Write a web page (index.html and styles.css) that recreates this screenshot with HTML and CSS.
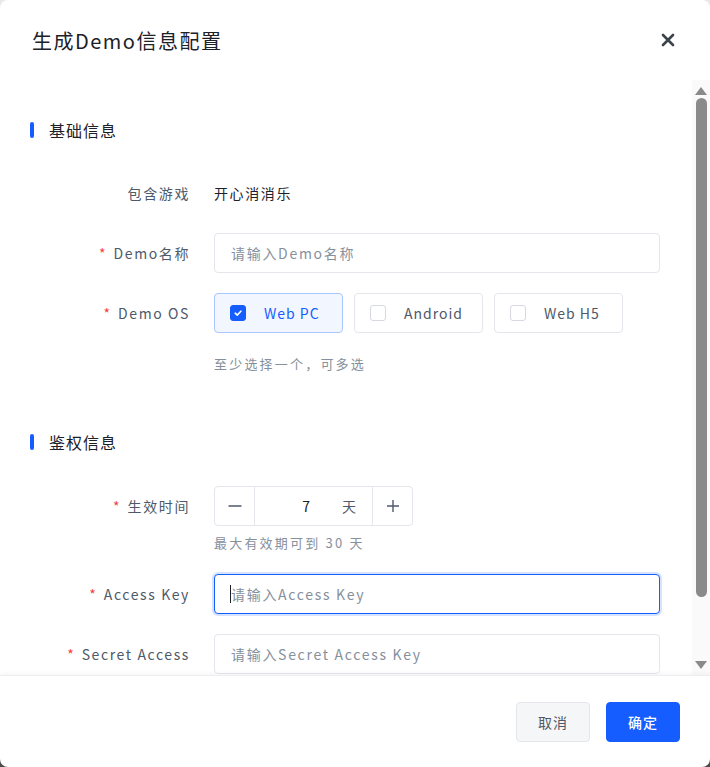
FILE: index.html
```html
<!DOCTYPE html>
<html lang="zh-CN">
<head>
<meta charset="utf-8">
<title>生成Demo信息配置</title>
<link rel="stylesheet" href="styles.css">
</head>
<body>
<div class="dialog">
  <header class="dialog-header">
    <h1 class="dialog-title">生成Demo信息配置</h1>
    <button class="close-btn" aria-label="关闭">
      <svg width="14" height="14" viewBox="0 0 14 14"><path d="M2 2 L12 12 M12 2 L2 12" stroke="#3d434d" stroke-width="2.6" stroke-linecap="round"/></svg>
    </button>
  </header>

  <div class="body-wrap">
    <div class="dialog-body">
      <h2 class="section-title">基础信息</h2>

      <div class="form-item">
        <label class="form-label">包含游戏</label>
        <div class="form-control"><span class="static-value">开心消消乐</span></div>
      </div>

      <div class="form-item">
        <label class="form-label"><span class="req">*</span>Demo名称</label>
        <div class="form-control"><input class="input" type="text" placeholder="请输入Demo名称"></div>
      </div>

      <div class="form-item">
        <label class="form-label"><span class="req">*</span>Demo OS</label>
        <div class="form-control">
          <div class="check-group">
            <label class="check-card checked"><span class="check-box"><svg width="10" height="10" viewBox="0 0 10 10"><path d="M2.2 5.2 L4.2 7.1 L7.9 3.2" fill="none" stroke="#fff" stroke-width="1.6" stroke-linecap="round" stroke-linejoin="round"/></svg></span><span class="check-text">Web PC</span></label>
            <label class="check-card"><span class="check-box"></span><span class="check-text">Android</span></label>
            <label class="check-card"><span class="check-box"></span><span class="check-text">Web H5</span></label>
          </div>
          <div class="help help-os">至少选择一个，可多选</div>
        </div>
      </div>

      <h2 class="section-title section-second">鉴权信息</h2>

      <div class="form-item">
        <label class="form-label"><span class="req">*</span>生效时间</label>
        <div class="form-control">
          <div class="number-input">
            <span class="step-btn"><svg width="14" height="14" viewBox="0 0 14 14"><path d="M0.5 7 H13.5" stroke="#4e5969" stroke-width="1.4"/></svg></span>
            <span class="number-mid"><span class="number-value">7</span><span class="number-suffix">天</span></span>
            <span class="step-btn step-plus"><svg width="14" height="14" viewBox="0 0 14 14"><path d="M1 7 H13 M7 1 V13" stroke="#4e5969" stroke-width="1.4"/></svg></span>
          </div>
          <div class="help help-time">最大有效期可到 30 天</div>
        </div>
      </div>

      <div class="form-item item-after-help">
        <label class="form-label"><span class="req">*</span>Access Key</label>
        <div class="form-control input-wrap">
          <input class="input input-focus" type="text" placeholder="请输入Access Key">
          <span class="caret"></span>
        </div>
      </div>

      <div class="form-item">
        <label class="form-label"><span class="req">*</span>Secret Access</label>
        <div class="form-control"><input class="input" type="text" placeholder="请输入Secret Access Key"></div>
      </div>
    </div>

    <div class="fake-scrollbar" aria-hidden="true">
      <span class="sb-arrow sb-up"></span>
      <span class="sb-track"><span class="sb-thumb"></span></span>
      <span class="sb-arrow sb-down"></span>
    </div>
  </div>

  <footer class="dialog-footer">
    <button class="btn btn-cancel">取消</button>
    <button class="btn btn-primary">确定</button>
  </footer>
</div>
</body>
</html>
```

FILE: styles.css
```css
* { box-sizing: border-box; }
html, body { margin: 0; padding: 0; }
body {
  width: 710px;
  height: 767px;
  background: linear-gradient(#e8e9ec, #4a4a4a);
  font-family: "Noto Sans CJK SC", "Noto Sans", sans-serif;
  overflow: hidden;
}
.dialog {
  width: 710px;
  height: 767px;
  background: #fff;
  border-radius: 8px;
  display: flex;
  flex-direction: column;
  overflow: hidden;
}
.dialog-header {
  height: 80px;
  flex: none;
  display: flex;
  align-items: center;
  justify-content: space-between;
  padding: 0 35px 0 32px;
}
.dialog-title {
  margin: 0;
  font-size: 20px;
  font-weight: 400;
  color: #1d2129;
  line-height: 28px;
  margin-top: 2px;
  letter-spacing: 1.5px;
}
.close-btn {
  border: 0;
  background: none;
  padding: 0;
  width: 14px;
  height: 14px;
  display: flex;
}
.body-wrap {
  flex: 1;
  position: relative;
  overflow: hidden;
}
.dialog-body {
  height: 100%;
  overflow: hidden;
  padding: 40px 0 84px 0;
}
.fake-scrollbar {
  position: absolute;
  top: 0;
  right: 0;
  width: 18px;
  height: 100%;
  background: #fafafa;
  display: flex;
  flex-direction: column;
  align-items: center;
  padding: 7px 0 6px;
}
.sb-arrow {
  width: 0;
  height: 0;
  border-left: 6px solid transparent;
  border-right: 6px solid transparent;
  flex: none;
}
.sb-up { border-bottom: 8px solid #8a8a8a; }
.sb-down { border-top: 8px solid #8a8a8a; }
.sb-track {
  flex: 1;
  width: 100%;
  display: flex;
  justify-content: center;
  padding: 3px 0 64px;
}
.sb-thumb {
  width: 11px;
  height: 100%;
  border-radius: 6px;
  background: #8a8a8a;
}
.section-title {
  margin: 0 0 33px 30px;
  padding-left: 19px;
  position: relative;
  font-size: 16px;
  font-weight: 400;
  line-height: 20px;
  color: #1d2129;
  letter-spacing: 1px;
}
.section-title::before {
  content: "";
  position: absolute;
  left: 0;
  top: 2px;
  width: 4px;
  height: 16px;
  border-radius: 2px;
  background: #165dff;
}
.section-second { margin-top: 58px; margin-bottom: 34px; }
.form-item {
  display: grid;
  grid-template-columns: 190px 446px;
  column-gap: 24px;
  align-items: start;
}
.form-item + .form-item { margin-top: 20px; }
.form-item.item-after-help { margin-top: 21px; }
.form-label {
  height: 40px;
  display: flex;
  align-items: center;
  justify-content: flex-end;
  font-size: 14px;
  color: #4e5969;
  letter-spacing: 1.6px;
  white-space: nowrap;
}
.req {
  color: #f53f3f;
  margin-right: 8px;
  letter-spacing: 0;
}
.form-control { min-height: 40px; }
.input-wrap { position: relative; }
.caret {
  position: absolute;
  left: 16px;
  top: 11px;
  width: 1px;
  height: 18px;
  background: #1d2129;
}
.static-value {
  display: flex;
  align-items: center;
  height: 40px;
  font-size: 14px;
  color: #1d2129;
  letter-spacing: 1.6px;
}
.input {
  display: block;
  width: 446px;
  height: 40px;
  border: 1px solid #e5e6eb;
  border-radius: 4px;
  padding: 0 16px;
  font-family: inherit;
  font-size: 14px;
  letter-spacing: 1.7px;
  color: #1d2129;
  background: #fff;
  outline: none;
}
.input::placeholder { color: #86909c; }
.input-focus, .input:focus {
  border-color: #165dff;
  box-shadow: 0 0 0 2px #d6e3ff;
}
.check-group { display: flex; gap: 11px; }
.check-card {
  width: 129px;
  height: 40px;
  border: 1px solid #e5e6eb;
  border-radius: 4px;
  display: flex;
  align-items: center;
  padding-left: 15px;
  font-size: 14px;
  color: #4e5969;
  letter-spacing: 1px;
  background: #fff;
}
.check-card.checked {
  border-color: #a8c6ff;
  background: #f2f6ff;
  color: #165dff;
}
.check-box {
  width: 16px;
  height: 16px;
  border: 1.5px solid #d6d9df;
  border-radius: 3px;
  margin-right: 18px;
  display: flex;
  align-items: center;
  justify-content: center;
  flex: none;
}
.checked .check-box { background: #165dff; border-color: #165dff; }
.help {
  font-size: 13px;
  line-height: 20px;
  color: #86909c;
  letter-spacing: 2.2px;
}
.help-os { margin-top: 21px; }
.help-time { margin-top: 7px; }
.number-input {
  width: 199px;
  height: 40px;
  border: 1px solid #e5e6eb;
  border-radius: 4px;
  display: flex;
  overflow: hidden;
}
.step-btn {
  width: 40px;
  flex: none;
  display: flex;
  align-items: center;
  justify-content: center;
  border-right: 1px solid #e5e6eb;
}
.step-plus { border-right: 0; border-left: 1px solid #e5e6eb; }
.number-mid {
  flex: 1;
  display: flex;
  align-items: center;
  font-size: 14px;
  color: #1d2129;
  padding-right: 16px;
}
.number-value { flex: 1; text-align: right; padding-right: 32px; }
.number-suffix { color: #4e5969; }
.dialog-footer {
  height: 92px;
  flex: none;
  display: flex;
  align-items: center;
  justify-content: flex-end;
  gap: 16px;
  padding-right: 30px;
  border-top: 1px solid #eceef1;
  box-shadow: 0 -2px 4px rgba(0,0,0,0.04);
  position: relative;
}
.btn {
  width: 74px;
  height: 40px;
  border-radius: 4px;
  font-family: inherit;
  font-size: 14px;
  letter-spacing: 1px;
  cursor: pointer;
}
.btn-cancel {
  background: #f5f6f7;
  border: 1px solid #e5e6eb;
  color: #4e5969;
}
.btn-primary {
  background: #165dff;
  border: 1px solid #165dff;
  color: #fff;
  font-weight: 500;
}
```
